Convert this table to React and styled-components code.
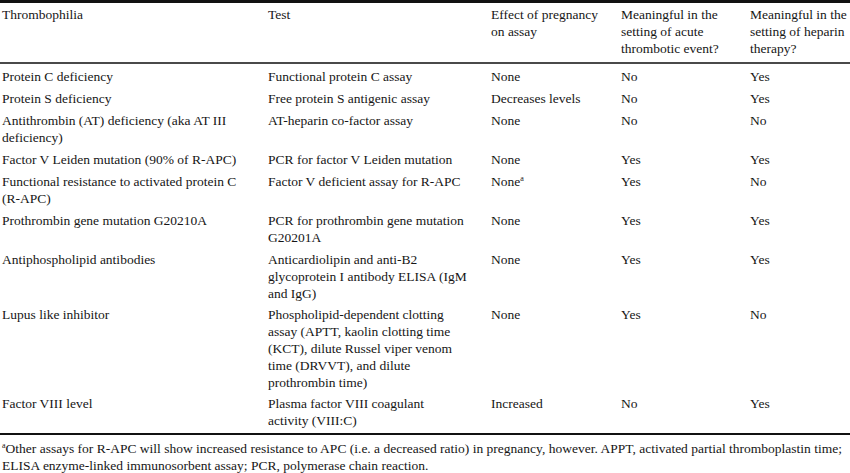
import styled, { createGlobalStyle } from "styled-components";

const GlobalStyle = createGlobalStyle`
  body {
    margin: 0;
    background: #fff;
    font-family: "Liberation Serif", "DejaVu Serif", serif;
    color: #161616;
  }
`;

const Wrap = styled.div`
  width: 850px;
`;

const Table = styled.table`
  width: 850px;
  border-collapse: collapse;
  table-layout: fixed;
  border-top: 3px solid #111;
  border-bottom: 2px solid #111;
  font-size: 13.5px;
  line-height: 17px;
`;

const Col = styled.col`
  width: ${(p) => p.w}px;
`;

const Th = styled.th`
  text-align: left;
  font-weight: normal;
  vertical-align: top;
  white-space: pre;
  padding: 3px 0 5px 2px;
  border-bottom: 2px solid #4a4a4a;
`;

const Td = styled.td`
  vertical-align: top;
  white-space: pre;
  padding: ${(p) => (p.first ? 4 : 3)}px 0 ${(p) => (p.last ? 4 : p.tight ? 1 : 2)}px 2px;
`;

const Sup = styled.sup`
  font-size: 8px;
  line-height: 0;
  vertical-align: 5px;
`;

const Note = styled.p`
  margin: 5px 0 0 2px;
  font-size: 13.5px;
  line-height: 17px;
  white-space: pre;
`;

const head = [
  "Thrombophilia",
  "Test",
  "Effect of pregnancy\non assay",
  "Meaningful in the\nsetting of acute\nthrombotic event?",
  "Meaningful in the\nsetting of heparin\ntherapy?",
];

const rows = [
  ["Protein C deficiency", "Functional protein C assay", "None", "No", "Yes"],
  ["Protein S deficiency", "Free protein S antigenic assay", "Decreases levels", "No", "Yes"],
  ["Antithrombin (AT) deficiency (aka AT III\ndeficiency)", "AT-heparin co-factor assay", "None", "No", "No"],
  ["Factor V Leiden mutation (90% of R-APC)", "PCR for factor V Leiden mutation", "None", "Yes", "Yes"],
  ["Functional resistance to activated protein C\n(R-APC)", "Factor V deficient assay for R-APC", "None*", "Yes", "No"],
  ["Prothrombin gene mutation G20210A", "PCR for prothrombin gene mutation\nG20201A", "None", "Yes", "Yes"],
  ["Antiphospholipid antibodies", "Anticardiolipin and anti-B2\nglycoprotein I antibody ELISA (IgM\nand IgG)", "None", "Yes", "Yes"],
  [
    "Lupus like inhibitor",
    "Phospholipid-dependent clotting\nassay (APTT, kaolin clotting time\n(KCT), dilute Russel viper venom\ntime (DRVVT), and dilute\nprothrombin time)",
    "None",
    "Yes",
    "No",
  ],
  ["Factor VIII level", "Plasma factor VIII coagulant\nactivity (VIII:C)", "Increased", "No", "Yes"],
];

const cell = (text) =>
  text.endsWith("*") ? (
    <>
      {text.slice(0, -1)}
      <Sup>a</Sup>
    </>
  ) : (
    text
  );

export default function App() {
  return (
    <Wrap>
      <GlobalStyle />
      <Table>
        <colgroup>
          <Col w={266} />
          <Col w={223} />
          <Col w={130} />
          <Col w={129} />
          <Col w={102} />
        </colgroup>
        <thead>
          <tr>
            {head.map((h) => (
              <Th key={h}>{h}</Th>
            ))}
          </tr>
        </thead>
        <tbody>
          {rows.map((r, i) => {
            const tight = r[1].split("\n").length > 2;
            return (
              <tr key={i}>
                {r.map((c, j) => (
                  <Td key={j} first={i === 0} last={i === rows.length - 1} tight={tight}>
                    {cell(c)}
                  </Td>
                ))}
              </tr>
            );
          })}
        </tbody>
      </Table>
      <Note>
        <Sup>a</Sup>
        {"Other assays for R-APC will show increased resistance to APC (i.e. a decreased ratio) in pregnancy, however. APPT, activated partial thromboplastin time;\nELISA enzyme-linked immunosorbent assay; PCR, polymerase chain reaction."}
      </Note>
    </Wrap>
  );
}
